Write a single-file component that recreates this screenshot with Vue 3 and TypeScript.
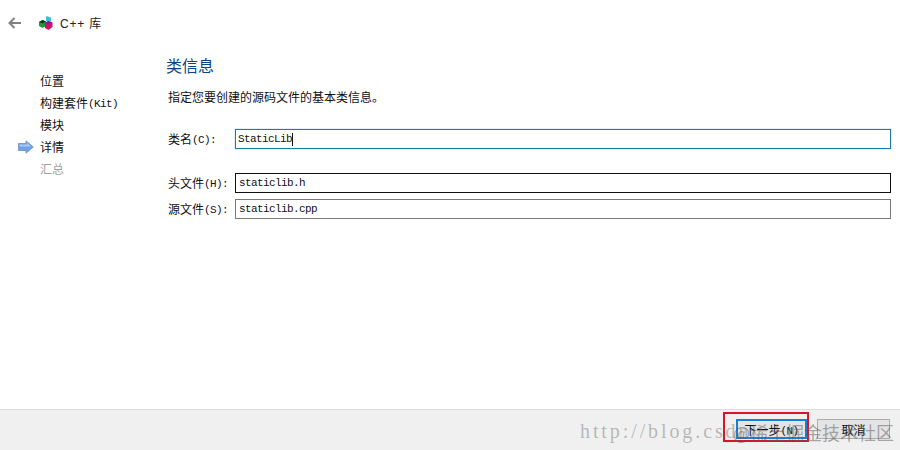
<script setup lang="ts">
const steps = [
  { zh: '位置', state: 'done' },
  { zh: '构建套件', en: '(Kit)', state: 'done' },
  { zh: '模块', state: 'done' },
  { zh: '详情', state: 'current' },
  { zh: '汇总', state: 'todo' },
]
const fields = [
  { zh: '类名', en: '(C):', value: 'StaticLib', kind: 'focus' },
  { zh: '头文件', en: '(H):', value: 'staticlib.h', kind: 'dark' },
  { zh: '源文件', en: '(S):', value: 'staticlib.cpp', kind: 'plain' },
]
</script>

<template>
  <div class="window">
    <header class="head">
      <svg class="back" width="14" height="12" viewBox="0 0 14 12">
        <path d="M6.500 1 1.500 6l5 5M2 6h11" fill="none" stroke="#808080" stroke-width="2" />
      </svg>
      <svg class="logo" width="14" height="14" viewBox="0 0 14 14">
        <path d="M7.500 0 12 1.500V5L9 6.500 7 5V1.500z" fill="#35c4d6" />
        <path d="M0 6 3.500 4 7 5.500V10l-3.500 2L0 10z" fill="#1c9a3e" />
        <path d="M0 6 3.500 4 7 5.500 3.500 7.500z" fill="#0d3a1c" />
        <path d="M6 7 9.500 5 13.500 6.500V11L9.500 14 6 12z" fill="#d0106a" />
        <path d="M6 7 9.500 5 13.500 6.500 10 8.500z" fill="#8a1aa8" />
      </svg>
      <span class="crumb">C++ 库</span>
    </header>

    <main class="body">
      <nav class="steps">
        <div v-for="s in steps" :key="s.zh" class="step" :class="s.state">
          <svg v-if="s.state === 'current'" class="arrow" width="16" height="14" viewBox="0 0 16 14">
            <path d="M.5 3.500H8V.8L15.300 7 8 13.200V10.500H.5z" fill="#6ea2e6" stroke="#7d9cc8" />
            <path d="M1.500 4.500H9V3l4 3.500H1.500z" fill="#a9c8f2" />
          </svg>
          <span class="step-text">{{ s.zh }}<span v-if="s.en" class="latin">{{ s.en }}</span></span>
        </div>
      </nav>

      <section class="content">
        <h1 class="title">类信息</h1>
        <p class="desc">指定您要创建的源码文件的基本类信息。</p>
        <div class="form">
          <div v-for="f in fields" :key="f.zh" class="row" :class="'row-' + f.kind">
            <label class="label">{{ f.zh }}<span class="latin">{{ f.en }}</span></label>
            <div class="input" :class="f.kind"><span class="latin value">{{ f.value }}</span><i v-if="f.kind === 'focus'" class="caret"></i></div>
          </div>
        </div>
      </section>
    </main>

    <footer class="foot">
      <button class="btn primary">下一步<span class="latin">(N)</span></button>
      <button class="btn">取消</button>
    </footer>

    <div class="mark"></div>
    <div class="wm wm-url">http://blog.csdn</div>
    <div class="wm wm-org">@稀土掘金技术社区</div>
  </div>
</template>

<style>
html, body { margin: 0; background: #fff; }
</style>

<style scoped>
.window {
  position: relative;
  width: 900px;
  height: 450px;
  display: flex;
  flex-direction: column;
  overflow: hidden;
  background: #fff;
  color: #111;
  font-family: "Noto Sans CJK SC", "Liberation Sans", sans-serif;
  font-size: 12px;
}
.head {
  height: 45px;
  flex: none;
  display: flex;
  align-items: center;
  padding: 0 0 0 8px;
  box-sizing: border-box;
}
.back { margin-right: 17px; }
.logo { margin-right: 7px; }
.crumb { font-family: "Liberation Sans", "Noto Sans CJK SC", sans-serif; font-size: 12px; letter-spacing: .8px; color: #222; }
.body { flex: 1; display: flex; min-height: 0; }
.steps { width: 168px; flex: none; padding: 25px 0 0 40px; box-sizing: border-box; }
.step { position: relative; height: 22px; line-height: 22px; }
.step.todo { color: #a0a0a0; }
.arrow { position: absolute; left: -22px; top: 4px; }
.latin { font-family: "Liberation Mono", monospace; font-size: 11px; letter-spacing: -.6px; vertical-align: 1px; }
.content { flex: 1; min-width: 0; padding-right: 9px; }
.title {
  margin: 8px 0 0 -2px;
  font-size: 16px;
  font-weight: 400;
  line-height: 24px;
  color: #0b4288;
}
.desc { margin: 10px 0 0; line-height: 20px; }
.form { margin-top: 22px; }
.row { display: flex; align-items: center; height: 20px; }
.row-dark { margin-top: 24px; }
.row-plain { margin-top: 6px; }
.label { width: 67px; flex: none; padding-bottom: 2px; }
.input {
  flex: 1;
  height: 20px;
  box-sizing: border-box;
  border: 1px solid #7a7a7a;
  display: flex;
  align-items: center;
  padding-left: 3px;
}
.input.focus { border-color: #1b7ab5; box-shadow: 0 0 0 1px #dff2f8; padding-left: 2px; }
.input.dark { border-color: #111; }
.caret { width: 1px; height: 13px; background: #111; }
.foot {
  height: 41px;
  flex: none;
  box-sizing: border-box;
  background: #f0f0f0;
  border-top: 1px solid #dcdcdc;
  display: flex;
  justify-content: flex-end;
  align-items: flex-start;
  gap: 10px;
  padding: 9px 10px 0 0;
}
.btn {
  width: 73px;
  height: 20px;
  padding: 1px 0 0;
  box-sizing: border-box;
  border: 1px solid #adadad;
  background: #e4e4e4;
  color: #111;
  font: inherit;
  line-height: 16px;
}
.btn.primary { width: 71px; border: 2px solid #1b7fd0; }
.mark {
  position: absolute;
  left: 723px;
  top: 412px;
  width: 86px;
  height: 30px;
  box-sizing: border-box;
  border: 2px solid #d8142c;
  pointer-events: none;
}
.wm { position: absolute; white-space: nowrap; pointer-events: none; color: rgba(110,110,110,.45); }
.wm-url {
  left: 580px;
  top: 420px;
  font-family: "Liberation Serif", serif;
  font-size: 20px;
  line-height: 22px;
  letter-spacing: 2.9px;
}
.wm-org {
  left: 733px;
  top: 420px;
  font-size: 18px;
  line-height: 24px;
  letter-spacing: 0;
  color: rgba(90,90,90,.5);
}
</style>
